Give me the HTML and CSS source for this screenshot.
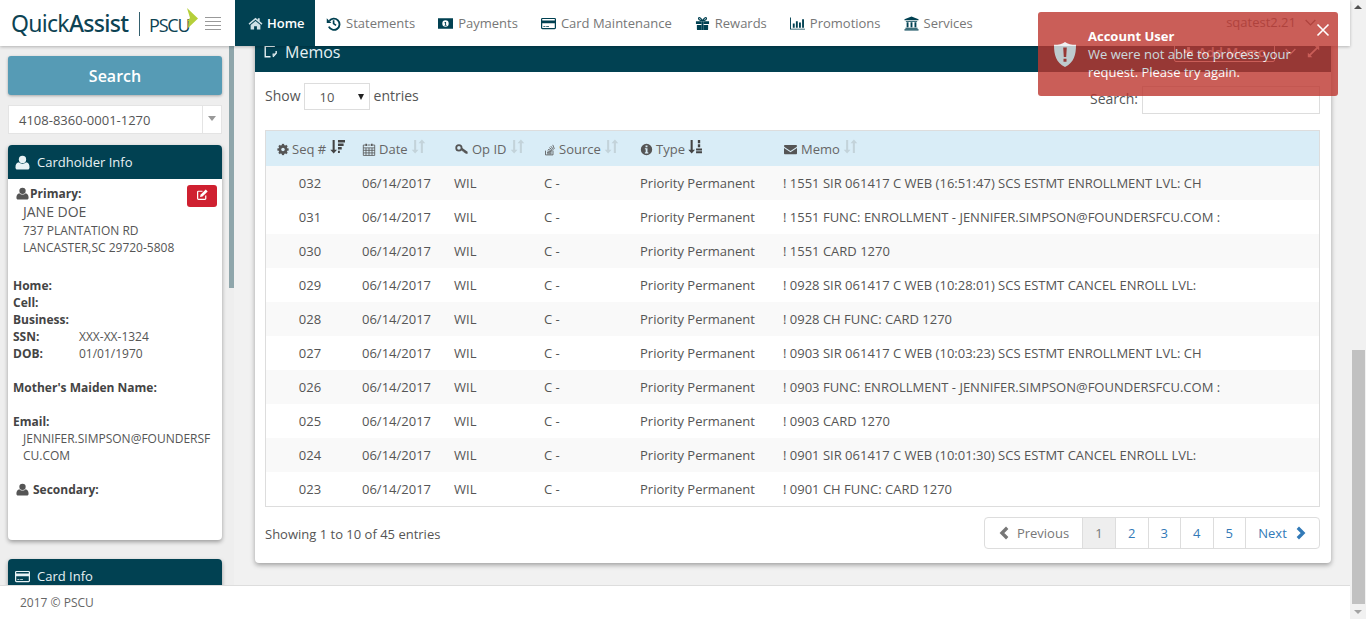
FILE: index.html

```html
<!DOCTYPE html>
<html lang="en">
<head>
  <meta charset="UTF-8" />
  <title>QuickAssist - Memos</title>
  <link rel="stylesheet" href="styles.css">
</head>
<body>
  <svg class="sprite" xmlns="http://www.w3.org/2000/svg">
    <symbol id="i-home" viewBox="0 0 16 16"><path d="M8 1.800 .6 8l1 1.200L8 3.900l6.400 5.300 1-1.200-2.900-2.400V2.400h-2v1.700zM2.800 9.600V14.400h3.700v-3.600h3v3.600h3.700V9.600L8 5.300z"/></symbol>
    <symbol id="i-history" viewBox="0 0 16 16"><path d="M3.600 5.200A6 6 0 1 1 3 11.400" fill="none" stroke="currentColor" stroke-width="2"/><path d="M.8 2.400v5h5zM7.200 4.600h1.800v3.200l2.200 1.500-1 1.400-3-2.100z"/></symbol>
    <symbol id="i-money" viewBox="0 0 16 16"><path fill-rule="evenodd" d="M0 2.500h16v11H0zM8 4.600a3.400 3.400 0 1 0 0 6.800 3.400 3.400 0 0 0 0-6.800zM7.200 6.400h1.400v3.400H9.400v.7H6.800v-.7h.8V7.400l-.8.3z"/></symbol>
    <symbol id="i-card" viewBox="0 0 16 16"><path fill-rule="evenodd" d="M1.500 2h13A1.500 1.500 0 0 1 16 3.500v9a1.500 1.500 0 0 1-1.500 1.500h-13A1.500 1.500 0 0 1 0 12.500v-9A1.500 1.500 0 0 1 1.500 2zM1.300 3.300v1.500h13.400V3.300zM1.300 7.600v5.100h13.400V7.600zM2.500 10.800h2.200v.9H2.500zM5.500 10.800h3v.9h-3z"/></symbol>
    <symbol id="i-gift" viewBox="0 0 16 16"><path d="M1 5.500h5.800v3H1zM9.200 5.500H15v3H9.200zM2 9.500h4.800V15H3a1 1 0 0 1-1-1zM9.200 9.500H14V14a1 1 0 0 1-1 1H9.200zM7 5.500h2V15H7z"/><path d="M8 5C6.500 2 4.500 1 3.800 2.200 3.200 3.400 5 5 8 5zM8 5c1.500-3 3.500-4 4.200-2.800C12.800 3.400 11 5 8 5z" fill="none" stroke="currentColor" stroke-width="1.200"/></symbol>
    <symbol id="i-chart" viewBox="0 0 16 16"><path d="M0 1.500h1v12h15v1H0zM3 8h2v4.500H3zM6.300 5.500h2v7h-2zM9.600 7h2v5.500h-2zM12.900 3.500h2v9h-2z"/></symbol>
    <symbol id="i-bank" viewBox="0 0 16 16"><path d="M8 .5 15.500 3.500v1H.5v-1zM2 5.200h12v.9H2zM2.800 6.600h2v5.400h-2zM7 6.600h2v5.400H7zM11.200 6.600h2v5.400h-2zM1.500 12.500h13v1.200h-13zM.5 14.200h15v1.300H.5z"/></symbol>
    <symbol id="i-note" viewBox="0 0 16 16"><path d="M8 14.500H1.500v-13h11v1M15 7.500v2.500l-4 4.500" fill="none" stroke="currentColor" stroke-width="1.700"/><path d="M10.500 10.500h3l-3 3z"/></symbol>
    <symbol id="i-user" viewBox="0 0 16 16"><circle cx="8" cy="4.700" r="3.900"/><path d="M4.300 7.800C5 9.800 11 9.800 11.700 7.800 14.300 8.300 15.500 10 15.500 13.300 15.500 14.600 14.700 15.500 13.400 15.500H2.600C1.300 15.500.5 14.600.5 13.300.5 10 1.700 8.300 4.300 7.800z"/></symbol>
    <symbol id="i-edit" viewBox="0 0 16 16"><path d="M12 9.200V13a1 1 0 0 1-1 1H3a1 1 0 0 1-1-1V5a1 1 0 0 1 1-1h5" fill="none" stroke="currentColor" stroke-width="1.500"/><path d="M12 1.800 14.400 4.200 8 10.600l-3 .6.500-3z"/></symbol>
    <symbol id="i-cog" viewBox="0 0 16 16"><circle cx="8" cy="8" r="4.300" fill="none" stroke="currentColor" stroke-width="3.400"/><g><rect x="6.500" y=".5" width="3" height="15"/><rect x="6.500" y=".5" width="3" height="15" transform="rotate(45 8 8)"/><rect x="6.500" y=".5" width="3" height="15" transform="rotate(90 8 8)"/><rect x="6.500" y=".5" width="3" height="15" transform="rotate(135 8 8)"/></g><circle cx="8" cy="8" r="2.300" fill="#d9edf7"/></symbol>
    <symbol id="i-calendar" viewBox="0 0 16 16"><path d="M3.500 2.500H1v12.800h14V2.500h-2.500M6 2.500h4M1 6h14M1 9h14M1 12.200h14M4.300 6v9.300M8 6v9.300M11.700 6v9.300" fill="none" stroke="currentColor"/><path d="M3.500 .8h2v3h-2zM10.500 .8h2v3h-2z"/></symbol>
    <symbol id="i-key" viewBox="0 0 16 16"><circle cx="4.800" cy="6" r="3.300" fill="none" stroke="currentColor" stroke-width="2.200"/><path d="M7.300 7.200 8.600 5.900 15.500 10.800v2.400h-2.300l-.9-1.300-1.300.2-.3-1.300-1.300-.2z"/></symbol>
    <symbol id="i-stack" viewBox="0 0 16 16"><path d="M2 9.500v5.700h10V9.500" fill="none" stroke="currentColor" stroke-width="1.100"/><path d="M4 13.800h6M4.100 12 10 12.500M4.500 10 10.200 11M5.500 7.800 10.800 9.900M7 5.500 11.800 9M9 3.500l3.800 4.600M11.700 1.800l2.100 5.400" fill="none" stroke="currentColor" stroke-width="1.100"/></symbol>
    <symbol id="i-info" viewBox="0 0 16 16"><path fill-rule="evenodd" d="M8 1a7 7 0 1 0 0 14A7 7 0 0 0 8 1zM6.800 3.200h2.400v2.100H6.800zM6 6.500h3.200v5h1v1.300H6v-1.300h1v-3.700H6z"/></symbol>
    <symbol id="i-mail" viewBox="0 0 16 16"><path d="M1.300 2.500h13.400c.7 0 1.300.6 1.300 1.300 0 .6-.4 1.100-1 1.500L8 9.800 1 5.300C.4 4.900 0 4.400 0 3.800 0 3.100.6 2.500 1.300 2.500zM0 6.200 8 11.400l8-5.200v6.300c0 .8-.6 1.300-1.300 1.300H1.300C.6 13.800 0 13.300 0 12.500z"/></symbol>
    <symbol id="i-sort" viewBox="0 0 16 16"><path d="M3.300 1h2.200v10.500H8L4.400 15.500.8 11.500h2.500zM10.500 15h2.200V4.500h2.500L11.600.5 8 4.500h2.500z"/></symbol>
    <symbol id="i-sort-amount" viewBox="0 0 16 16"><path d="M2.800 1H5v10.500h2.500L3.900 15.500.3 11.500h2.500zM8.500 1H16v2.600H8.500zM8.500 4.800H14.500v2.600H8.500zM8.500 8.600H12.500v2.600H8.500zM8.500 12.400H10.500v2.600H8.500z"/></symbol>
    <symbol id="i-sort-alpha" viewBox="0 0 16 16"><path d="M2.800 1H5v10.500h2.500L3.900 15.500.3 11.500h2.500zM10.500 1h2.500v3.500h-2.500zM10.500 5.600h2.500v3.300h-2.500zM8.600 10h6.300v2.200H8.600zM8.600 13h6.300v2.200H8.600z"/></symbol>
    <symbol id="i-left" viewBox="0 0 16 16"><path d="M10.500 2 4.500 8l6 6" fill="none" stroke="currentColor" stroke-width="3.800"/></symbol>
    <symbol id="i-right" viewBox="0 0 16 16"><path d="M5.500 2l6 6-6 6" fill="none" stroke="currentColor" stroke-width="3.800"/></symbol>
    <symbol id="i-shield" viewBox="0 0 22 25"><path fill-rule="evenodd" d="M11 0C13.500 2 17.500 2.800 22 2.800 22 13 20 20.500 11 25 2 20.500 0 13 0 2.800 4.500 2.800 8.500 2 11 0zM9.200 5.500 9.800 15h2.400l.6-9.500zM9.500 16.800v3h3v-3z"/></symbol>
    <symbol id="i-plus" viewBox="0 0 16 16"><path d="M6 1.500h4v4.500h4.500v4H10v4.500H6V10H1.500V6H6z"/></symbol>
    <symbol id="i-chevron" viewBox="0 0 16 16"><path d="M2 5l6 6 6-6" fill="none" stroke="currentColor" stroke-width="1.600"/></symbol>
    <symbol id="i-expand" viewBox="0 0 16 16"><path d="M9.500 1H15v5.500l-2-2L4.500 13 6.500 15H1V9.500l2 2L11.500 3z"/></symbol>
    <symbol id="i-close" viewBox="0 0 14 14"><path d="M1.500 1.500l11 11M12.500 1.500l-11 11" fill="none" stroke="currentColor" stroke-width="1.600"/></symbol>
  </svg>

  <div class="window">
    <div class="page">
      <header class="topbar">
        <div class="brand">
          <span class="logo-name">Quick<b>Assist</b></span>
          <span class="logo-rule"></span>
          <span class="logo-pscu">PSCU</span>
          <svg class="logo-mark" viewBox="0 0 11 20"><path d="M0 0 11 10.500 1 20l.5-7L0 13l3-3z" fill="#b5cf3a"/></svg>
          <span class="burger"><i></i><i></i><i></i><i></i></span>
        </div>
        <nav class="nav">
          <a class="nav-item active"><svg class="ico"><use href="#i-home"/></svg>Home</a>
          <a class="nav-item"><svg class="ico"><use href="#i-history"/></svg>Statements</a>
          <a class="nav-item"><svg class="ico"><use href="#i-money"/></svg>Payments</a>
          <a class="nav-item"><svg class="ico"><use href="#i-card"/></svg>Card Maintenance</a>
          <a class="nav-item"><svg class="ico"><use href="#i-gift"/></svg>Rewards</a>
          <a class="nav-item"><svg class="ico"><use href="#i-chart"/></svg>Promotions</a>
          <a class="nav-item"><svg class="ico"><use href="#i-bank"/></svg>Services</a>
        </nav>
        <div class="user-menu">sqatest2.21 <svg class="ico-sm"><use href="#i-chevron"/></svg></div>
      </header>

      <div class="content">
        <aside class="sidebar">
          <div class="side-col">
            <button class="search-btn">Search</button>
            <div class="account-select">
              <span class="account-no">4108-8360-0001-1270</span>
              <span class="account-caret"></span>
            </div>

            <section class="side-panel">
              <h3 class="side-head"><svg class="ico"><use href="#i-user"/></svg>Cardholder Info</h3>
              <div class="side-body">
                <button class="edit-btn"><svg class="ico-sm"><use href="#i-edit"/></svg></button>
                <div class="line primary"><svg class="ico-sm"><use href="#i-user"/></svg><b>Primary:</b></div>
                <div class="holder-name">JANE DOE</div>
                <div class="line indent">737 PLANTATION RD</div>
                <div class="line indent">LANCASTER,SC 29720-5808</div>
                <div class="line gap-top"><b>Home:</b></div>
                <div class="line"><b>Cell:</b></div>
                <div class="line"><b>Business:</b></div>
                <div class="line pair"><b>SSN:</b><span>XXX-XX-1324</span></div>
                <div class="line pair"><b>DOB:</b><span>01/01/1970</span></div>
                <div class="line gap-line"><b>Mother's Maiden Name:</b></div>
                <div class="line gap-line"><b>Email:</b></div>
                <div class="line indent">JENNIFER.SIMPSON@FOUNDERSF</div>
                <div class="line indent">CU.COM</div>
                <div class="line gap-line primary"><svg class="ico-sm"><use href="#i-user"/></svg><b class="wide">Secondary:</b></div>
              </div>
            </section>

            <section class="side-panel">
              <h3 class="side-head"><svg class="ico"><use href="#i-card"/></svg>Card Info</h3>
            </section>
          </div>
          <div class="side-scroll"></div>
        </aside>

        <main class="main">
          <section class="panel">
            <div class="panel-head">
              <h2 class="panel-title"><svg class="ico"><use href="#i-note"/></svg>Memos</h2>
              <div class="panel-tools">
                <a class="add-btn"><svg class="ico-xs"><use href="#i-plus"/></svg>Add Memo</a>
                <svg class="ico-sm"><use href="#i-chevron"/></svg>
                <svg class="ico-sm"><use href="#i-expand"/></svg>
              </div>
            </div>
            <div class="panel-body">
              <div class="table-controls">
                <div class="length">Show <span class="length-select">10<i class="caret"></i></span> entries</div>
                <div class="filter">Search: <span class="filter-input"></span></div>
              </div>

              <table class="memo-table">
                <colgroup>
                  <col class="c-seq"><col class="c-date"><col class="c-op"><col class="c-src"><col class="c-type"><col>
                </colgroup>
                <thead>
                  <tr>
                    <th class="th-seq"><svg class="ico-th"><use href="#i-cog"/></svg>Seq # <svg class="ico-sort on"><use href="#i-sort-amount"/></svg></th>
                    <th><svg class="ico-th w14"><use href="#i-calendar"/></svg>Date <svg class="ico-sort"><use href="#i-sort"/></svg></th>
                    <th><svg class="ico-th w15"><use href="#i-key"/></svg>Op ID <svg class="ico-sort"><use href="#i-sort"/></svg></th>
                    <th><svg class="ico-th"><use href="#i-stack"/></svg>Source <svg class="ico-sort"><use href="#i-sort"/></svg></th>
                    <th><svg class="ico-th w13"><use href="#i-info"/></svg>Type <svg class="ico-sort on"><use href="#i-sort-alpha"/></svg></th>
                    <th><svg class="ico-th w15"><use href="#i-mail"/></svg>Memo <svg class="ico-sort"><use href="#i-sort"/></svg></th>
                  </tr>
                </thead>
                <tbody>
                  <tr><td>032</td><td>06/14/2017</td><td>WIL</td><td>C -</td><td>Priority Permanent</td><td>! 1551 SIR 061417 C WEB (16:51:47) SCS ESTMT ENROLLMENT LVL: CH</td></tr>
                  <tr><td>031</td><td>06/14/2017</td><td>WIL</td><td>C -</td><td>Priority Permanent</td><td>! 1551 FUNC: ENROLLMENT - JENNIFER.SIMPSON@FOUNDERSFCU.COM :</td></tr>
                  <tr><td>030</td><td>06/14/2017</td><td>WIL</td><td>C -</td><td>Priority Permanent</td><td>! 1551 CARD 1270</td></tr>
                  <tr><td>029</td><td>06/14/2017</td><td>WIL</td><td>C -</td><td>Priority Permanent</td><td>! 0928 SIR 061417 C WEB (10:28:01) SCS ESTMT CANCEL ENROLL LVL:</td></tr>
                  <tr><td>028</td><td>06/14/2017</td><td>WIL</td><td>C -</td><td>Priority Permanent</td><td>! 0928 CH FUNC: CARD 1270</td></tr>
                  <tr><td>027</td><td>06/14/2017</td><td>WIL</td><td>C -</td><td>Priority Permanent</td><td>! 0903 SIR 061417 C WEB (10:03:23) SCS ESTMT ENROLLMENT LVL: CH</td></tr>
                  <tr><td>026</td><td>06/14/2017</td><td>WIL</td><td>C -</td><td>Priority Permanent</td><td>! 0903 FUNC: ENROLLMENT - JENNIFER.SIMPSON@FOUNDERSFCU.COM :</td></tr>
                  <tr><td>025</td><td>06/14/2017</td><td>WIL</td><td>C -</td><td>Priority Permanent</td><td>! 0903 CARD 1270</td></tr>
                  <tr><td>024</td><td>06/14/2017</td><td>WIL</td><td>C -</td><td>Priority Permanent</td><td>! 0901 SIR 061417 C WEB (10:01:30) SCS ESTMT CANCEL ENROLL LVL:</td></tr>
                  <tr><td>023</td><td>06/14/2017</td><td>WIL</td><td>C -</td><td>Priority Permanent</td><td>! 0901 CH FUNC: CARD 1270</td></tr>
                </tbody>
              </table>

              <div class="table-foot">
                <div class="table-info">Showing 1 to 10 of 45 entries</div>
                <ul class="pager">
                  <li class="disabled prev"><svg class="ico-pg"><use href="#i-left"/></svg>Previous</li>
                  <li class="current">1</li>
                  <li>2</li>
                  <li>3</li>
                  <li>4</li>
                  <li>5</li>
                  <li class="next">Next<svg class="ico-pg"><use href="#i-right"/></svg></li>
                </ul>
              </div>
            </div>
          </section>
        </main>
      </div>

      <footer class="footer">2017 &copy; PSCU</footer>
    </div>

    <div class="page-scroll">
      <span class="arrow-up"></span>
      <span class="thumb"></span>
      <span class="arrow-down"></span>
    </div>

    <div class="toast">
      <svg class="toast-icon"><use href="#i-shield"/></svg>
      <div class="toast-text">
        <div class="toast-title">Account User</div>
        <div>We were not able to process your request. Please try again.</div>
      </div>
      <svg class="toast-close"><use href="#i-close"/></svg>
    </div>
  </div>
</body>
</html>
```

FILE: styles.css

```css
* {
  box-sizing: border-box;
}

body {
  margin: 0;
  font-family: "Open Sans", "Liberation Sans", sans-serif;
  font-size: 13px;
  color: #555;
  background: #f1f1f1;
}

.sprite {
  display: none;
}

svg {
  fill: currentColor;
  flex: none;
}

.window {
  position: relative;
  display: flex;
  height: 100vh;
  overflow: hidden;
}

.page {
  flex: 1;
  min-width: 0;
  display: flex;
  flex-direction: column;
}

/* top bar */
.topbar {
  position: relative;
  z-index: 2;
  flex: none;
  height: 46px;
  display: flex;
  background: #fff;
  box-shadow: 0 1px 3px rgba(0,0,0,.25);
}

.brand {
  width: 235px;
  display: flex;
  align-items: center;
  padding-left: 11px;
}

.logo-name {
  width: 121px;
  font-family: "Noto Sans", sans-serif;
  font-size: 23px;
  letter-spacing: -.7px;
  color: #0d4353;
}

.logo-name b {
  font-weight: 500;
}

.logo-rule {
  width: 1px;
  height: 24px;
  background: #34606e;
  margin: 2px 9px 0 7px;
}

.logo-pscu {
  width: 38px;
  margin-top: 3px;
  font-size: 18px;
  letter-spacing: -1.2px;
  color: #0d4353;
}

.logo-mark {
  width: 11px;
  height: 20px;
  margin-top: -10px;
}

.burger {
  display: flex;
  flex-direction: column;
  gap: 3px;
  width: 16px;
  margin-left: 7px;
}

.burger i {
  height: 1px;
  background: #999;
}

.nav {
  display: flex;
}

.nav-item {
  display: flex;
  align-items: center;
  gap: 5px;
  padding: 0 11.5px;
  color: #777;
  white-space: nowrap;
}

.nav-item .ico {
  color: #014152;
}

.nav-item.active {
  gap: 4px;
  padding: 0 10px 0 13px;
  background: #014152;
  color: #fff;
  font-weight: 600;
}

.nav-item.active .ico {
  color: #cfe0e6;
}

.ico {
  width: 15px;
  height: 15px;
}

.ico-sm {
  width: 13px;
  height: 13px;
}

.ico-xs {
  width: 11px;
  height: 11px;
}

.user-menu {
  margin-left: auto;
  margin-right: 33px;
  height: 46px;
  padding-bottom: 2px;
  display: flex;
  align-items: center;
  gap: 8px;
  color: #777;
}

/* sidebar */
.content {
  flex: 1;
  min-height: 0;
  display: flex;
  overflow: hidden;
}

.sidebar {
  flex: none;
  width: 234px;
  display: flex;
  background: #eee;
  overflow: hidden;
}

.side-col {
  width: 229px;
  padding: 10px 7px 0 8px;
}

.side-scroll {
  width: 5px;
  height: 242px;
  background: #8fa6ab;
}

.search-btn {
  display: block;
  width: 100%;
  height: 39px;
  border: 0;
  border-radius: 3px;
  background: #569bb5;
  color: #fff;
  font: 600 16px "Open Sans", sans-serif;
  box-shadow: 0 1px 3px rgba(0,0,0,.3);
}

.account-select {
  display: flex;
  align-items: center;
  height: 29px;
  margin-top: 10px;
  background: #fff;
  border: 1px solid #e4e4e4;
  color: #555;
}

.account-no {
  flex: 1;
  padding-left: 10px;
}

.account-caret {
  position: relative;
  width: 19px;
  height: 100%;
  border-left: 1px solid #e4e4e4;
}

.account-caret::after {
  content: "";
  position: absolute;
  left: 5px;
  top: 10px;
  border: 4px solid transparent;
  border-top: 5px solid #999;
  border-bottom: 0;
}

.side-panel {
  margin-top: 11px;
  border-radius: 4px;
  background: #fff;
  box-shadow: 0 2px 4px rgba(0,0,0,.35);
  overflow: hidden;
}

.side-panel + .side-panel {
  margin-top: 19px;
}

.side-head {
  margin: 0;
  height: 34px;
  display: flex;
  align-items: center;
  gap: 7px;
  padding-left: 7px;
  background: #014152;
  color: #e8f2f5;
  font-size: 13px;
  font-weight: 400;
}

.side-body {
  position: relative;
  height: 361px;
  padding: 6px 5px 0;
  font-size: 12px;
  line-height: 17px;
  color: #555;
}

.side-body b {
  color: #444;
  font-weight: 700;
}

.line {
  height: 17px;
  white-space: nowrap;
}

.primary {
  display: flex;
  align-items: center;
  gap: 1px;
  padding-left: 3px;
}

.primary b.wide {
  margin-left: 3px;
}

.indent {
  padding-left: 10px;
}

.holder-name {
  height: 20px;
  line-height: 20px;
  padding-left: 10px;
  font-size: 14px;
}

.gap-top {
  margin-top: 21px;
}

.gap-line {
  margin-top: 17px;
}

.pair {
  display: flex;
}

.pair b {
  width: 66px;
}

.edit-btn {
  position: absolute;
  right: 5px;
  top: 6px;
  width: 30px;
  height: 22px;
  padding: 0;
  border: 0;
  border-radius: 3px;
  background: #cf2030;
  color: #fff;
}

/* main panel */
.main {
  flex: 1;
  min-width: 0;
  padding: 0 19px 0 21px;
  overflow: hidden;
}

.panel {
  margin-top: -15px;
  background: #fff;
  border-radius: 0 0 4px 4px;
  box-shadow: 0 2px 5px rgba(0,0,0,.35);
}

.panel-head {
  height: 41px;
  display: flex;
  align-items: center;
  justify-content: space-between;
  padding: 0 11px 0 9px;
  background: #014152;
  color: #fff;
}

.panel-title {
  margin: 0;
  display: flex;
  align-items: center;
  gap: 8px;
  font-size: 16px;
  font-weight: 400;
  color: #e8f2f5;
}

.panel-title .ico {
  width: 13px;
  height: 13px;
}

.panel-tools {
  display: flex;
  align-items: center;
  gap: 10px;
}

.add-btn {
  display: flex;
  align-items: center;
  justify-content: center;
  gap: 4px;
  width: 101px;
  height: 21px;
  margin-right: -1px;
  border: 1px solid #fff;
  border-radius: 2px;
  font-weight: 600;
}

.panel-body {
  padding: 11px 11px 14px 10px;
}

.table-controls {
  display: flex;
  justify-content: space-between;
  height: 47px;
  font-size: 14px;
}

.length {
  display: flex;
  align-items: flex-start;
  gap: 3px;
  line-height: 25px;
}

.length-select {
  width: 66px;
  height: 27px;
  margin-right: 1px;
  padding: 1px 0 0 15px;
  display: flex;
  align-items: center;
  justify-content: space-between;
  border: 1px solid #ddd;
  background: #fff;
  font-size: 13px;
}

.caret {
  border: 3.5px solid transparent;
  border-top: 6px solid #222;
  border-bottom: 0;
  margin-right: 5px;
}

.filter {
  display: flex;
  align-items: flex-start;
  gap: 4px;
  margin-top: 3px;
  line-height: 26px;
}

.filter-input {
  width: 178px;
  height: 28px;
  border: 1px solid #ddd;
}

.memo-table {
  width: 100%;
  table-layout: fixed;
  border-collapse: separate;
  border-spacing: 0;
  border: 1px solid #ddd;
}

.c-seq { width: 84px; }
.c-date { width: 92px; }
.c-op { width: 90px; }
.c-src { width: 96px; }
.c-type { width: 143px; }

.memo-table th {
  height: 35px;
  padding: 0 0 0 12px;
  background: #d9edf7;
  color: #666;
  font-weight: 400;
  text-align: left;
  white-space: nowrap;
}

.memo-table .th-seq {
  padding-left: 11px;
}

.memo-table td {
  height: 34px;
  padding: 0 0 0 12px;
  color: #555;
  white-space: nowrap;
}

.memo-table td:first-child {
  padding: 0 0 0 4px;
  text-align: center;
}

.memo-table tbody tr:nth-child(odd) {
  background: #f9f9f9;
}

.ico-th {
  width: 12px;
  height: 13px;
  margin-right: 3px;
  vertical-align: -2px;
  color: #555;
}

.ico-th.w13 { width: 13px; }
.ico-th.w14 { width: 14px; }
.ico-th.w15 { width: 15px; }

.ico-sort {
  width: 15px;
  height: 15px;
  vertical-align: 0;
  color: #c3d3da;
}

.ico-sort.on {
  color: #444;
}

.table-foot {
  display: flex;
  justify-content: space-between;
  align-items: center;
  margin-top: 10px;
}

.table-info {
  padding-top: 2px;
}

.pager {
  display: flex;
  margin: 0;
  padding: 0;
  list-style: none;
  height: 32px;
  border: 1px solid #ddd;
  border-radius: 4px;
  color: #337ab7;
}

.pager li {
  display: flex;
  align-items: center;
  justify-content: center;
  width: 32.5px;
  border-left: 1px solid #ddd;
}

.pager li:first-child {
  border-left: 0;
}

.pager .prev {
  width: 97px;
  gap: 5px;
  color: #777;
}

.pager .next {
  width: 74px;
  gap: 6px;
}

.pager .current {
  width: 33px;
  background: #eee;
  color: #777;
}

.ico-pg {
  width: 14px;
  height: 14px;
}

.footer {
  position: relative;
  z-index: 2;
  flex: none;
  height: 34px;
  padding-left: 20px;
  display: flex;
  align-items: center;
  background: #fff;
  border-top: 1px solid #ddd;
  font-size: 12px;
  color: #666;
}

/* browser scrollbar */
.page-scroll {
  flex: none;
  width: 16px;
  display: flex;
  flex-direction: column;
  align-items: center;
  background: #f1f1f1;
  padding: 5px 0;
}

.arrow-up {
  border: 4px solid transparent;
  border-bottom: 4px solid #505050;
  border-top: 0;
}

.thumb {
  width: 13px;
  height: 254px;
  margin-top: auto;
  margin-bottom: 6px;
  background: #c1c1c1;
}

.arrow-down {
  border: 4px solid transparent;
  border-top: 4px solid #a3a3a3;
  border-bottom: 0;
}

/* toast */
.toast {
  position: absolute;
  z-index: 5;
  top: 12px;
  left: 1038px;
  width: 300px;
  height: 84px;
  display: flex;
  padding: 15px 15px 0 16px;
  background: #bd362f;
  border-radius: 3px;
  color: #fff;
  opacity: .8;
  line-height: 18px;
}

.toast-icon {
  width: 22px;
  height: 25px;
  margin: 15px 12px 0 0;
  color: #eee;
}

.toast-text {
  width: 216px;
}

.toast-title {
  font-weight: 700;
}

.toast-close {
  position: absolute;
  top: 11px;
  right: 8px;
  width: 14px;
  height: 14px;
}
```
